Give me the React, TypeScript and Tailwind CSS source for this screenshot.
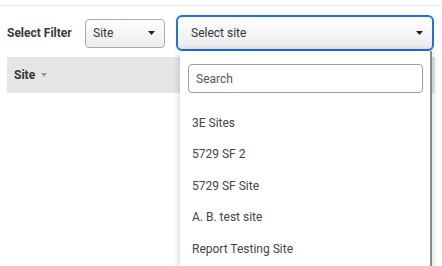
import { useState } from 'react'

const sites = ['3E Sites', '5729 SF 2', '5729 SF Site', 'A. B. test site', 'Report Testing Site']

function Caret({ className = '', w = 7, h = 4 }: { className?: string; w?: number; h?: number }) {
  return (
    <svg width={w} height={h} viewBox={`0 0 ${w} ${h}`} className={className}>
      <path d={`M0 0h${w}L${w / 2} ${h}z`} fill="currentColor" />
    </svg>
  )
}

export default function App() {
  const [query, setQuery] = useState('')

  return (
    <div className="relative w-[442px] h-[266px] overflow-hidden bg-white font-['Roboto',sans-serif] text-[#333]">
      <div className="pt-[5px]">
        <div className="border-t border-[#ebebeb]" />
      </div>

      <div className="flex items-center h-[36px] mt-[9px] pl-[7px]">
        <span className="text-[12px] font-bold text-[#3a3a3a] w-[78px]">Select Filter</span>
        <div className="flex items-center justify-between w-[80px] h-[29px] pl-[7px] pr-[9px] rounded-[4px] border border-[#a9a9a9] bg-gradient-to-b from-white to-[#ececec] text-[12px] text-[#333]">
          <span>Site</span>
          <Caret className="text-[#222]" />
        </div>
        <div className="ml-[11px] flex items-center justify-between w-[258px] h-[36px] pl-[13px] pr-[9px] rounded-[6px] border-2 border-[#1a73e8] bg-gradient-to-b from-white to-[#ececec] text-[12px] text-[#333]">
          <span>Select site</span>
          <Caret className="text-[#222]" />
        </div>
      </div>

      <div className="mx-[7px] mt-[6px] h-[36px] bg-[#e6e6e6] flex items-center px-[7px]">
        <span className="text-[12px] font-bold text-[#333]">Site</span>
        <Caret className="ml-[6px] text-[#9a9a9a]" w={6} h={4} />
      </div>

      <div className="absolute left-[180px] top-[51px] w-[252px] h-[230px] bg-white shadow-[0_0_8px_rgba(0,0,0,0.2)] border-r-2 border-[#8a8a8a]">
        <div className="px-[8px] pt-[13px]">
          <input
            value={query}
            onChange={(e) => setQuery(e.target.value)}
            placeholder="Search"
            className="w-[235px] h-[29px] rounded-[4px] border border-[#9e9e9e] px-[7px] text-[12px] text-[#333] placeholder:text-[#555] outline-none"
          />
        </div>
        <ul className="mt-[14px]">
          {sites
            .filter((s) => s.toLowerCase().includes(query.toLowerCase()))
            .map((s) => (
              <li key={s} className="h-[31.5px] flex items-center pl-[12px] text-[12px] text-[#444]">
                {s}
              </li>
            ))}
        </ul>
      </div>
    </div>
  )
}
